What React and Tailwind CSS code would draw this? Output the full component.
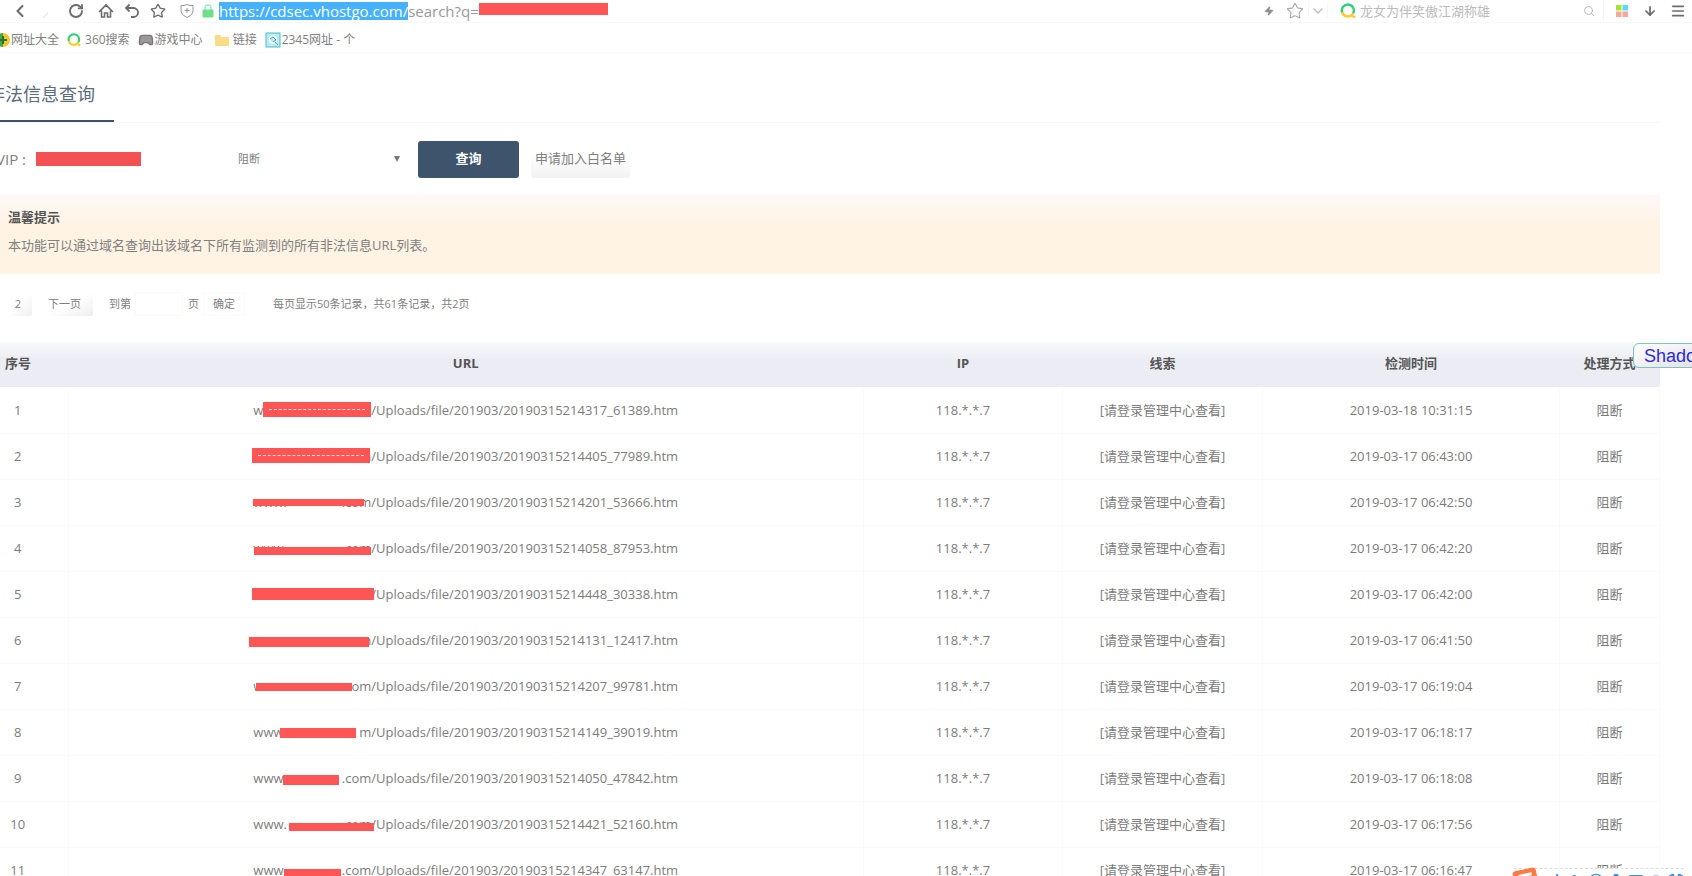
import { useState } from "react"
import {
  ChevronLeft,
  ChevronDown,
  RotateCw,
  House,
  Star,
  Zap,
  Search,
  ArrowDown,
  Menu,
  Gamepad2,
  Smile,
  Mic,
  Keyboard,
  Shirt,
  User,
} from "lucide-react"

// bar: [left, top, width, height] of the mask over the host name
const records = [
  { id: 1, file: "20190315214317_61389", time: "2019-03-18 10:31:15", bar: [10, 1, 108, 15], dashed: true },
  { id: 2, file: "20190315214405_77989", time: "2019-03-17 06:43:00", bar: [-1, 1, 118, 15], dashed: true },
  { id: 3, file: "20190315214201_53666", time: "2019-03-17 06:42:50", bar: [0, 6, 111, 7] },
  { id: 4, file: "20190315214058_87953", time: "2019-03-17 06:42:20", bar: [1, 8, 117, 8] },
  { id: 5, file: "20190315214448_30338", time: "2019-03-17 06:42:00", bar: [-1, 3, 122, 12] },
  { id: 6, file: "20190315214131_12417", time: "2019-03-17 06:41:50", bar: [-4, 6, 120, 10] },
  { id: 7, file: "20190315214207_99781", time: "2019-03-17 06:19:04", bar: [3, 6, 96, 8] },
  { id: 8, file: "20190315214149_39019", time: "2019-03-17 06:18:17", bar: [27, 5, 76, 10], tail: "m" },
  { id: 9, file: "20190315214050_47842", time: "2019-03-17 06:18:08", bar: [30, 6, 56, 10] },
  { id: 10, file: "20190315214421_52160", time: "2019-03-17 06:17:56", bar: [36, 8, 85, 8] },
  { id: 11, file: "20190315214347_63147", time: "2019-03-17 06:16:47", bar: [31, 8, 57, 7] },
]

function Ring({ className }) {
  return (
    <svg viewBox="0 0 16 16" className={className} fill="none" strokeWidth="2.4">
      <path d="M2.2 9.5A6 6 0 1 1 13 10.5" stroke="#2fd07a" />
      <path d="M2.2 9.5A6 6 0 0 0 13 10.5" stroke="#ffc928" />
      <path d="M12.5 13l2.5 1.5" stroke="#ffc928" />
    </svg>
  )
}

function NavButton({ label, className, children }) {
  return (
    <button type="button" aria-label={label} className={`flex shrink-0 items-center justify-center ${className}`}>
      {children}
    </button>
  )
}

function AddressBar() {
  const [keyword, setKeyword] = useState("")

  return (
    <div className="flex h-[23px] items-center border-b border-[#f8f8f8] text-[#6c6c6c]">
      <NavButton label="后退" className="ml-2 w-6">
        <ChevronLeft className="h-5 w-5" strokeWidth={2.5} />
      </NavButton>
      <NavButton label="前进" className="ml-1 w-5">
        <svg viewBox="0 0 8 8" className="mt-2 h-2 w-2" stroke="#ddd">
          <path d="M1 7l5-5" />
        </svg>
      </NavButton>
      <NavButton label="刷新" className="ml-1 w-8">
        <RotateCw className="h-4 w-4" strokeWidth={2.8} />
      </NavButton>
      <NavButton label="主页" className="w-7">
        <svg viewBox="0 0 16 16" className="h-4 w-4" fill="none" stroke="currentColor" strokeWidth="1.6">
          <path d="M1 9l7-7 7 7M3.500 7.500V14H6.500V10h3v4h3V7.500" />
        </svg>
      </NavButton>
      <NavButton label="恢复" className="w-6">
        <svg viewBox="0 0 16 16" className="h-4 w-4" fill="none" stroke="currentColor" strokeWidth="1.800">
          <path d="M5.500 1.500L2 5l3.500 3.500M2 5h7.500a4.500 4.500 0 0 1 0 9H7" />
        </svg>
      </NavButton>
      <NavButton label="收藏" className="w-7">
        <Star className="h-4 w-4" strokeWidth={2} />
      </NavButton>
      <svg viewBox="0 0 14 14" className="ml-2 h-[14px] w-[14px] shrink-0" fill="none" stroke="#999">
        <path d="M1 1.5Q4 2 7 .5Q10 2 13 1.5V7Q13 11 7 13.5Q1 11 1 7Z" />
        <path d="M7 4v5M4.500 6.500h5" />
      </svg>
      <svg viewBox="0 0 12 14" className="mr-1 ml-2 h-[14px] w-3 shrink-0">
        <path d="M3 7V4a3 3 0 0 1 6 0v3" fill="none" stroke="#9fe8cc" strokeWidth="1.600" />
        <path d="M0.500 5.500h11v8H0.500z" fill="#6fe088" />
      </svg>
      <div className="ml-px flex min-w-0 flex-1 items-center text-[15px] leading-[18px] text-[#999]">
        <span className="bg-[#45b1ff] text-white">https://cdsec.vhostgo.com/</span>
        <span>search?q=</span>
        <span className="mb-1 h-3 w-[129px] bg-[#ff5555]" />
      </div>
      <NavButton label="极速模式" className="w-5">
        <Zap className="h-[10px] w-[10px] fill-[#888] text-[#888]" />
      </NavButton>
      <NavButton label="添加收藏" className="ml-1 w-6">
        <Star className="h-[18px] w-[18px] text-[#aaa]" strokeWidth={1.5} />
      </NavButton>
      <NavButton label="展开" className="ml-px w-5 border-x border-[#f6f6f6]">
        <ChevronDown className="h-4 w-4 text-[#bbb]" />
      </NavButton>
      <label className="ml-2 flex w-[268px] items-center border-r border-[#f4f4f4] pr-2 pl-1">
        <Ring className="mr-1 h-4 w-4 shrink-0" />
        <input
          aria-label="搜索"
          value={keyword}
          onChange={(e) => setKeyword(e.target.value)}
          placeholder="龙女为伴笑傲江湖称雄"
          className="min-w-0 flex-1 text-[13px] leading-[18px] outline-none placeholder:text-[#bbb]"
        />
        <Search className="h-3 w-3 text-[#bbb]" />
      </label>
      <NavButton label="应用" className="ml-2 w-5">
        <svg viewBox="0 0 12 12" className="h-3 w-3">
          <path d="M0 0h5.500v5.500H0z" fill="#a5e52f" />
          <path d="M6.500 0H12v5.500H6.500z" fill="#5fd8f2" />
          <path d="M0 6.500h5.500V12H0zM6.500 6.500H12V12H6.500z" fill="#f8a898" />
        </svg>
      </NavButton>
      <NavButton label="下载" className="ml-2 w-5">
        <ArrowDown className="h-[14px] w-[14px]" strokeWidth={3} />
      </NavButton>
      <NavButton label="菜单" className="mr-1 ml-2 w-5">
        <Menu className="h-4 w-4" strokeWidth={2.5} />
      </NavButton>
    </div>
  )
}

function Bookmarks() {
  return (
    <nav className="flex h-[30px] items-center border-b border-[#f8f8f8] pt-1 text-[12px] leading-4 text-[#808080]">
      <a href="#sites" className="-ml-1 flex items-center gap-px">
        <svg viewBox="0 0 14 14" className="h-[14px] w-[14px]">
          <circle cx="7" cy="7" r="7" fill="#f5c52c" />
          <path d="M7 0a7 7 0 0 0 0 14" fill="#4aa84a" />
          <path d="M7 3v8M3 7h8" stroke="#28752c" strokeWidth="2" />
        </svg>
        网址大全
      </a>
      <a href="#search" className="ml-2 flex items-center gap-1">
        <Ring className="h-[14px] w-[14px]" />
        360搜索
      </a>
      <a href="#games" className="ml-2 flex items-center gap-px">
        <Gamepad2 className="h-4 w-4 fill-[#999] text-[#777]" />
        游戏中心
      </a>
      <a href="#links" className="ml-3 flex items-center gap-1">
        <svg viewBox="0 0 14 12" className="h-3 w-[14px]">
          <path d="M0 1h5l1 2h8v9H0z" fill="#f9dc83" />
        </svg>
        链接
      </a>
      <a href="#2345" className="ml-2 flex items-center gap-px">
        <svg viewBox="0 0 16 16" className="h-4 w-4" fill="none">
          <rect x="1" y="1" width="14" height="14" fill="#bce9f0" stroke="#4cbccb" />
          <circle cx="8" cy="7.500" r="3.500" stroke="#fff" strokeWidth="1.500" />
          <path d="M5 7l3-2 3 3-3 2M10 10l3 3" stroke="#4a9fc0" />
        </svg>
        2345网址 - 个
      </a>
    </nav>
  )
}

function QueryForm() {
  return (
    <form className="mt-[17px] flex h-[38px] items-center pl-7 text-[#808080]" onSubmit={(e) => e.preventDefault()}>
      <label htmlFor="vip" className="w-10 text-[15px] leading-5 whitespace-nowrap">
        VIP :
      </label>
      <input id="vip" className="h-[14px] w-[105px] bg-[#f45252] outline-none" />
      <div className="relative ml-[93px] flex w-[184px] items-center">
        <select aria-label="处理方式" className="w-full appearance-none pl-1 text-[11px] leading-4 outline-none">
          <option>阻断</option>
        </select>
        <svg viewBox="0 0 6 6" className="pointer-events-none absolute right-[18px] h-[6px] w-[6px]">
          <path d="M0 0h6L3 6z" fill="#777" />
        </svg>
      </div>
      <button type="submit" className="h-[37px] w-[101px] rounded-[3px] bg-[#3d546c] text-[13px] font-bold text-white">
        查询
      </button>
      <button
        type="button"
        className="ml-3 h-[37px] rounded-[3px] bg-linear-to-b from-white from-40% to-[#f2f2f2] px-1 text-[13px]"
      >
        申请加入白名单
      </button>
    </form>
  )
}

function Pager() {
  return (
    <div className="mt-[18px] flex h-6 items-center pl-8 text-[11px] leading-4 text-[#808080]">
      <button type="button" className="ml-2 h-6 w-6 rounded-xs bg-linear-to-br from-white from-50% to-[#eee] pr-1">
        2
      </button>
      <button
        type="button"
        className="ml-3 h-6 w-[49px] rounded-xs bg-linear-to-br from-white from-50% to-[#eee] pr-2"
      >
        下一页
      </button>
      <label htmlFor="page" className="ml-4">
        到第
      </label>
      <input id="page" className="mx-1 h-6 w-12 rounded-xs border border-[#fafafa] outline-none" />
      <span className="ml-px">页</span>
      <button type="button" className="ml-1 h-6 w-[42px] rounded-xs border border-[#fafafa]">
        确定
      </button>
      <span className="ml-7">每页显示50条记录，共61条记录，共2页</span>
    </div>
  )
}

function MaskedUrl({ file, bar, dashed, tail = ".com" }) {
  const [left, top, width, height] = bar
  return (
    <a href={`#${file}`} className="inline-flex">
      <span className="relative flex w-[118px] justify-between">
        <span>www.</span>
        <span>{tail}</span>
        <span className="absolute flex items-center bg-[#ff5555] px-1.5" style={{ left, top, width, height }}>
          {dashed && <span className="w-full border-t border-dashed border-[#ffe4e4]" />}
        </span>
      </span>
      /Uploads/file/201903/{file}.htm
    </a>
  )
}

function RecordTable() {
  return (
    <table className="mt-[26px] w-full table-fixed border-collapse text-center text-[13px] leading-[18px] text-[#7c7c7c]">
      <colgroup>
        <col className="w-[100px]" />
        <col />
        <col className="w-[199px]" />
        <col className="w-[200px]" />
        <col className="w-[297px]" />
        <col className="w-[100px]" />
      </colgroup>
      <thead>
        <tr className="h-[45px] bg-linear-to-b from-[#f9f9fb] to-[#ecedf4] to-40% text-[#555] [&>th]:pb-1">
          <th>序号</th>
          <th>URL</th>
          <th>IP</th>
          <th>线索</th>
          <th>检测时间</th>
          <th>处理方式</th>
        </tr>
      </thead>
      <tbody>
        {records.map((r) => (
          <tr key={r.id} className="h-[46px] border-b border-[#fafafa] [&>td]:border-r [&>td]:border-[#fafafa]">
            <td>{r.id}</td>
            <td>
              <MaskedUrl file={r.file} bar={r.bar} dashed={r.dashed} tail={r.tail} />
            </td>
            <td>118.*.*.7</td>
            <td>[请登录管理中心查看]</td>
            <td>{r.time}</td>
            <td>阻断</td>
          </tr>
        ))}
      </tbody>
    </table>
  )
}

function InputMethodBar() {
  return (
    <div className="absolute right-2 -bottom-4 flex h-6 items-center gap-1 border-t border-dashed border-[#ddd] bg-white text-[#3d8fdc]">
      <svg viewBox="0 0 24 24" className="mr-2 h-6 w-6 -rotate-12">
        <rect width="24" height="24" rx="4" fill="#ff7a45" />
        <path d="M19 6H8Q5 6 5 9t3 3h8q3 0 3 3t-3 3H5" fill="none" stroke="#fff" strokeWidth="3" />
      </svg>
      <span className="text-[14px] leading-4 font-bold">中</span>
      <span className="w-4 text-center text-[14px] leading-4 font-bold">°,</span>
      <Smile className="h-4 w-4" />
      <Mic className="h-4 w-4 fill-[#3d8fdc]" />
      <Keyboard className="h-4 w-4" />
      <User className="h-4 w-4 text-[#c5d5e5]" />
      <Shirt className="h-4 w-4 fill-[#3d8fdc]" />
    </div>
  )
}

export default function App() {
  return (
    <div className="relative h-screen overflow-hidden bg-white font-['Open_Sans','Noto_Sans_CJK_SC',sans-serif]">
      <AddressBar />
      <Bookmarks />
      <main className="mr-8 -ml-8">
        <div className="mt-[26px] flex border-b border-[#f8f8f8]">
          <h1 className="border-b-2 border-[#3d546c] px-[19px] pt-px pb-3 text-[18px] leading-7 text-[#5b6b7c]">
            非法信息查询
          </h1>
        </div>
        <QueryForm />
        <section className="mt-[17px] h-[79px] bg-linear-to-b from-[#fff8f8] to-[#fff3e3] to-40% pt-3 pl-10 text-[13px] text-[#808080]">
          <h2 className="leading-5 font-bold text-[#555]">温馨提示</h2>
          <p className="mt-2 leading-5">本功能可以通过域名查询出该域名下所有监测到的所有非法信息URL列表。</p>
        </section>
        <Pager />
        <RecordTable />
      </main>
      <button
        type="button"
        className="absolute top-[343px] -right-3 h-[25px] w-[71px] rounded-md border border-[#7cc4c0] bg-linear-to-br from-white to-[#e4e0e4] pl-[10px] text-left font-['Liberation_Sans',sans-serif] text-[18px] leading-5 text-[#2a2ae0]"
      >
        Shado
      </button>
      <InputMethodBar />
    </div>
  )
}
